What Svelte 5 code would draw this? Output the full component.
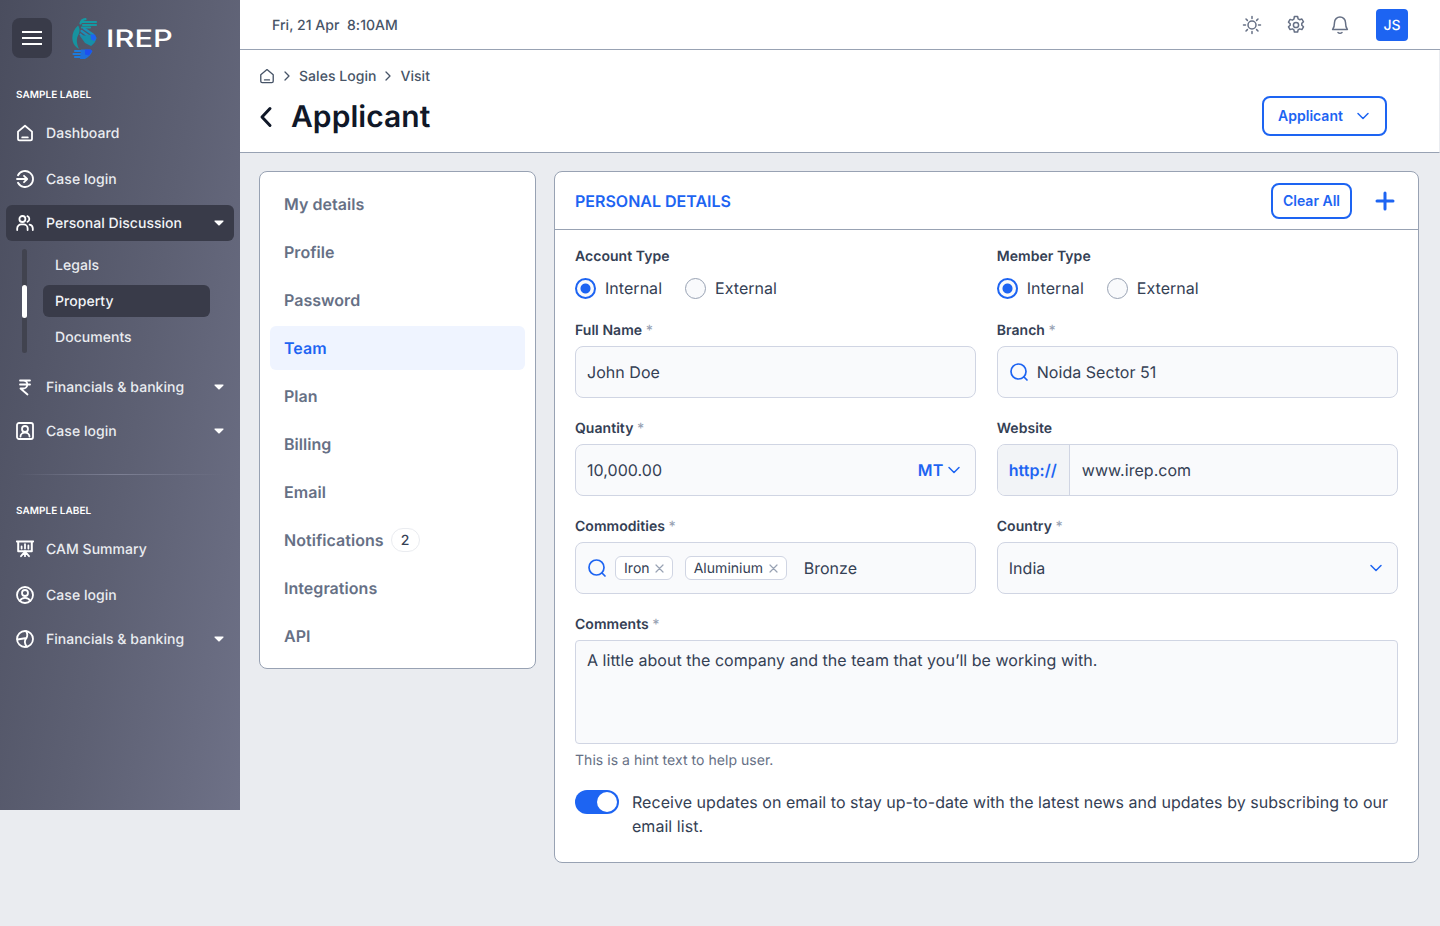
<script lang="ts">
  const topNav = [
    { label: "Dashboard", icon: "home", wide: false },
    { label: "Case login", icon: "login", wide: true }
  ];
  const subNav = ["Legals", "Property", "Documents"];
  const tabs = ["My details", "Profile", "Password", "Team", "Plan", "Billing", "Email", "Notifications", "Integrations", "API"];
</script>

{#snippet caret()}
  <svg class="caret" width="10" height="6" viewBox="0 0 10 6"><path d="M1 .5h8a.6.6 0 0 1 .45 1L5.4 5.4a.6.6 0 0 1-.8 0L.55 1.5A.6.6 0 0 1 1 .5z" fill="#fff" /></svg>
{/snippet}

{#snippet chevron(size = 16)}
  <svg width={size} height={size} viewBox="0 0 16 16" fill="none" stroke="currentColor" stroke-width="1.5" stroke-linecap="round" stroke-linejoin="round"><path d="M3 5.5l5 5 5-5" /></svg>
{/snippet}

{#snippet search()}
  <svg width="20" height="20" viewBox="0 0 20 20" fill="none" stroke="#1d64f2" stroke-width="1.7" stroke-linecap="round"><circle cx="9.500" cy="9.500" r="7.500" /><path d="M15 15l3 3" /></svg>
{/snippet}

{#snippet cross()}
  <svg width="9" height="9" viewBox="0 0 9 9" fill="none" stroke="#98a2b3" stroke-width="1.2" stroke-linecap="round"><path d="M1 1l7 7M8 1 1 8" /></svg>
{/snippet}

{#snippet navIcon(name: string)}
  <svg class="nav-icon" width="18" height="18" viewBox="0 0 18 18" fill="none" stroke="#fff" stroke-width="1.8" stroke-linecap="round" stroke-linejoin="round">
    {#if name === "home"}
      <path d="M2 7.600 9 1.800l7 5.800v7.200a1.600 1.600 0 0 1-1.600 1.600H3.600A1.600 1.600 0 0 1 2 14.800z" /><path d="M6.200 13.400h5.600" />
    {:else if name === "login"}
      <path d="M2 5.200A8 8 0 1 1 2 12.800" /><path d="M1 9h10M8 5.800 11.200 9 8 12.200" />
    {:else if name === "people"}
      <circle cx="6.400" cy="5" r="3" /><path d="M1.200 16v-1.600a4 4 0 0 1 4-4h2.400a4 4 0 0 1 4 4V16" /><path d="M11.400 2.200a3 3 0 0 1 0 5.600M13.600 10.600a4 4 0 0 1 3.200 3.800V16" />
    {:else if name === "rupee"}
      <path d="M4 2.500h10M4 6.500h10M4.500 2.500h2.800a4 4 0 0 1 0 8H4.500l7 6" />
    {:else if name === "badge"}
      <rect x="1" y="1" width="16" height="16" rx="2" /><circle cx="9" cy="7" r="3" /><path d="M4.500 14.500a4.500 4 0 0 1 9 0" />
    {:else if name === "board"}
      <path d="M.8 1.400h16.400M2.200 1.400v9.800h13.600V1.400" stroke-width="2" /><path d="M5.600 8.600V6.400M9 8.600V4.200M12.400 8.600V5.400M9 11.200v5M9 11.600l-4 4.600M9 11.600l4 4.600" />
    {:else if name === "user"}
      <circle cx="9" cy="9" r="8" /><circle cx="9" cy="7" r="3" /><path d="M3.800 15a5.600 5 0 0 1 10.400 0" />
    {:else if name === "globe"}
      <circle cx="9" cy="9" r="8" /><path d="M10 1c2 3 1.500 5 .5 7L1.500 9.500M10.500 8c-2.500 3-2 6 .5 8.800" />
    {/if}
  </svg>
{/snippet}

<div class="app">
  <aside class="sidebar">
    <div class="brand">
      <button class="burger" aria-label="Menu">
        <svg width="20" height="14" viewBox="0 0 20 14" stroke="#fff" stroke-width="2"><path d="M0 1h20M0 7h20M0 13h20" /></svg>
      </button>
      <div class="logo">
        <svg width="26" height="42" viewBox="0 0 26 42" fill="none" stroke-linecap="round">
          <g stroke="#149aa4" stroke-width="2.200">
            <path d="M8.500 5.500c.5-2.500 2.500-4 5-4.300M10 4h14M11 7h13M10 9.500h8" />
          </g>
          <path d="M6 7.500C1 12-.5 18 .8 23.500c.8 3 3 5.800 6.200 7.500C4.500 26 4 21 6.500 16.500 8 13.500 8 10 6 7.500z" fill="#16939f" />
          <g stroke="#1a8fb8" stroke-width="2.200">
            <path d="M12 10.500l9 6M9.500 13l12 8.500M8.500 16.500l10 8.500" />
          </g>
          <path d="M8 18l5 7 6 3c3-2 5-5 5.500-8-1-2-3-3-5-4-3 2-8 1-11.500 2z" fill="#178fa8" />
          <path d="M18.500 16.500h4.500l1.500 3.500-2 3-3.500-1.500z" fill="#1d64f2" />
          <g stroke="#1d7bdc" stroke-width="2.200">
            <path d="M3 33h8M1.500 36h9M3 39h9" />
          </g>
          <path d="M9 31.500h9.500l2 1.500c-1.500 3.500-4 6.500-7.500 8H8z" fill="#1d6fdc" />
          <path d="M13 31.500h5.500l1.500 1.500-3 4.500-4-1z" fill="#1d4ff2" />
        </svg>
        <span>IREP</span>
      </div>
    </div>

    <p class="nav-label">SAMPLE LABEL</p>
    {#each topNav as item}
      <a class="nav-row" class:wide={item.wide} href="#top">
        {@render navIcon(item.icon)}
        <span>{item.label}</span>
      </a>
    {/each}
    <a class="nav-row active" href="#top">
      {@render navIcon("people")}
      <span>Personal Discussion</span>
      {@render caret()}
    </a>

    <div class="sub-nav">
      <div class="rail"><i></i></div>
      <div class="sub-items">
        {#each subNav as item}
          <a class="sub-row" class:current={item === "Property"} href="#top">{item}</a>
        {/each}
      </div>
    </div>

    <a class="nav-row after-sub" href="#top">
      {@render navIcon("rupee")}
      <span>Financials &amp; banking</span>
      {@render caret()}
    </a>
    <a class="nav-row" href="#top">
      {@render navIcon("badge")}
      <span>Case login</span>
      {@render caret()}
    </a>

    <hr />

    <p class="nav-label second">SAMPLE LABEL</p>
    <a class="nav-row flush" href="#top">
      {@render navIcon("board")}
      <span>CAM Summary</span>
    </a>
    <a class="nav-row wide" href="#top">
      {@render navIcon("user")}
      <span>Case login</span>
    </a>
    <a class="nav-row" href="#top">
      {@render navIcon("globe")}
      <span>Financials &amp; banking</span>
      {@render caret()}
    </a>
  </aside>

  <main class="main">
    <header class="topbar">
      <span class="date">Fri, 21 Apr&nbsp; 8:10AM</span>
      <div class="top-actions">
        <svg width="20" height="20" viewBox="0 0 20 20" fill="none" stroke="#667085" stroke-width="1.500" stroke-linecap="round"><circle cx="10" cy="10" r="4" /><path d="M10 1.500v2M10 16.500v2M1.500 10h2M16.500 10h2M4 4l1.400 1.400M14.600 14.600 16 16M4 16l1.400-1.400M14.600 5.400 16 4" /></svg>
        <svg width="20" height="20" viewBox="0 0 20 20" fill="none" stroke="#667085" stroke-width="1.500" stroke-linejoin="round"><circle cx="10" cy="10" r="2.600" /><path d="M8.400 1.500h3.200l.5 2.300 1.500.9 2.300-.7 1.600 2.800-1.700 1.600v1.800l1.700 1.600-1.600 2.800-2.300-.7-1.500.9-.5 2.300H8.400l-.5-2.300-1.500-.9-2.300.7-1.600-2.800 1.700-1.600V8.800L2.500 7.200l1.600-2.800 2.300.7 1.500-.9z" /></svg>
        <svg width="20" height="20" viewBox="0 0 20 20" fill="none" stroke="#667085" stroke-width="1.500" stroke-linecap="round" stroke-linejoin="round"><path d="M10 2a5.500 5.500 0 0 0-5.500 5.500c0 4-.7 5.600-1.900 7h14.800c-1.200-1.400-1.900-3-1.900-7A5.500 5.500 0 0 0 10 2z" /><path d="M8 17.500c1 1 3 1 4 0" /></svg>
        <span class="avatar">JS</span>
      </div>
    </header>

    <section class="page-head">
      <div>
        <nav class="crumbs">
          <svg width="16" height="16" viewBox="0 0 18 18" fill="none" stroke="#475467" stroke-width="1.500" stroke-linejoin="round" stroke-linecap="round"><path d="M2 7.600 9 1.800l7 5.800v7.200a1.600 1.600 0 0 1-1.600 1.600H3.600A1.600 1.600 0 0 1 2 14.800z" /><path d="M6.200 13.400h5.600" /></svg>
          <svg class="sep" width="8" height="10" viewBox="0 0 8 10" fill="none" stroke="#475467" stroke-width="1.300" stroke-linecap="round" stroke-linejoin="round"><path d="M2 1l4 4-4 4" /></svg>
          <span>Sales Login</span>
          <svg class="sep" width="8" height="10" viewBox="0 0 8 10" fill="none" stroke="#475467" stroke-width="1.300" stroke-linecap="round" stroke-linejoin="round"><path d="M2 1l4 4-4 4" /></svg>
          <span>Visit</span>
        </nav>
        <div class="title-row">
          <svg width="14" height="22" viewBox="0 0 14 22" fill="none" stroke="#101828" stroke-width="3" stroke-linecap="round" stroke-linejoin="round"><path d="M11 2.500 3 11l8 8.500" /></svg>
          <h1>Applicant</h1>
        </div>
      </div>
      <button class="outline-btn applicant">Applicant {@render chevron()}</button>
    </section>

    <div class="content">
      <nav class="tabs">
        {#each tabs as tab}
          <a class="tab" class:selected={tab === "Team"} href="#top">
            {tab}
            {#if tab === "Notifications"}<span class="count">2</span>{/if}
          </a>
        {/each}
      </nav>

      <section class="card">
        <header class="card-head">
          <h2>PERSONAL DETAILS</h2>
          <button class="outline-btn clear">Clear All</button>
          <svg class="plus" width="20" height="20" viewBox="0 0 20 20" stroke="#1d64f2" stroke-width="3" stroke-linecap="round"><path d="M10 2v16M2 10h16" /></svg>
        </header>

        <form class="form">
          <div class="field">
            <span class="label first">Account Type</span>
            <div class="radios">
              <span class="radio on"><i></i>Internal</span>
              <span class="radio"><i></i>External</span>
            </div>
          </div>
          <div class="field">
            <span class="label first">Member Type</span>
            <div class="radios">
              <span class="radio on"><i></i>Internal</span>
              <span class="radio"><i></i>External</span>
            </div>
          </div>

          <div class="field">
            <span class="label">Full Name <em>*</em></span>
            <div class="input">John Doe</div>
          </div>
          <div class="field">
            <span class="label">Branch <em>*</em></span>
            <div class="input">{@render search()}<span>Noida Sector 51</span></div>
          </div>

          <div class="field">
            <span class="label">Quantity <em>*</em></span>
            <div class="input">
              <span class="grow">10,000.00</span>
              <span class="unit">MT {@render chevron()}</span>
            </div>
          </div>
          <div class="field">
            <span class="label">Website</span>
            <div class="input addon">
              <span class="prefix">http://</span>
              <span>www.irep.com</span>
            </div>
          </div>

          <div class="field">
            <span class="label">Commodities <em>*</em></span>
            <div class="input tags">
              {@render search()}
              <span class="chip">Iron {@render cross()}</span>
              <span class="chip">Aluminium {@render cross()}</span>
              <span class="typed">Bronze</span>
            </div>
          </div>
          <div class="field">
            <span class="label">Country <em>*</em></span>
            <div class="input">
              <span class="grow">India</span>
              <span class="unit">{@render chevron()}</span>
            </div>
          </div>

          <div class="field full">
            <span class="label">Comments <em>*</em></span>
            <div class="textarea">A little about the company and the team that you’ll be working with.</div>
            <p class="hint">This is a hint text to help user.</p>
          </div>

          <div class="consent full">
            <span class="toggle"><i></i></span>
            <p>Receive updates on email to stay up-to-date with the latest news and updates by subscribing to our email list.</p>
          </div>
        </form>
      </section>
    </div>
  </main>
</div>

<style>
  :global(body) {
    background: #eaecf0;
    font-family: Inter, "Liberation Sans", sans-serif;
    color: #101828;
    text-rendering: geometricPrecision;
    letter-spacing: 0.04px;
  }

  .app {
    display: flex;
    align-items: flex-start;
    height: 926px;
    overflow: hidden;
  }

  /* sidebar */
  .sidebar {
    flex: 0 0 240px;
    box-sizing: border-box;
    height: 810px;
    padding: 18px 6px 0;
    background: linear-gradient(100deg, #4a4d5e 0%, #5d6073 55%, #6e7187 100%);
    color: #eaecf0;
  }

  .brand {
    display: flex;
    align-items: flex-start;
    gap: 20px;
    height: 40px;
    padding-left: 6px;
  }

  .burger {
    display: grid;
    place-items: center;
    width: 40px;
    height: 40px;
    padding: 0;
    border: 0;
    border-radius: 8px;
    background: #393b49;
  }

  .logo {
    display: flex;
    align-items: center;
    gap: 8px;
  }

  .logo span {
    font-size: 24px;
    font-weight: 500;
    line-height: 28px;
    color: #fff;
    transform: scaleX(1.28);
    transform-origin: left center;
  }

  .nav-label {
    margin: 28px 0 0 10px;
    font-size: 10px;
    line-height: 18px;
    font-weight: 600;
    color: #fff;
  }

  .nav-label.second {
    margin-top: 27px;
  }

  .nav-row {
    display: flex;
    align-items: center;
    height: 36px;
    margin-top: 8px;
    padding: 0 10px;
    border-radius: 6px;
    color: #eaecf0;
    font-size: 14px;
    font-weight: 500;
    text-decoration: none;
  }

  .nav-row.wide {
    margin-top: 10px;
  }

  .nav-row.flush {
    margin-top: 11px;
  }

  .nav-row.after-sub {
    margin-top: 16px;
  }

  .nav-row:first-of-type {
    margin-top: 11px;
  }

  .nav-row span {
    flex: 1;
  }

  .nav-icon {
    flex: none;
    margin-right: 12px;
  }

  .nav-row.active {
    background: #393b49;
    color: #f2f4f7;
  }

  .sub-nav {
    display: flex;
    gap: 16px;
    margin-top: 8px;
    padding-left: 16px;
  }

  .rail {
    position: relative;
    width: 5px;
    border-radius: 3px;
    background: #41434f;
  }

  .rail i {
    position: absolute;
    top: 36px;
    left: 0;
    width: 5px;
    height: 33px;
    border-radius: 3px;
    background: #fff;
  }

  .sub-items {
    display: flex;
    flex-direction: column;
    gap: 4px;
    width: 167px;
  }

  .sub-row {
    height: 32px;
    padding: 0 12px;
    border-radius: 6px;
    color: #eaecf0;
    font-size: 14px;
    font-weight: 500;
    line-height: 34px;
    text-decoration: none;
  }

  .sub-row.current {
    background: #393b49;
    color: #f2f4f7;
  }

  hr {
    height: 1px;
    margin: 25px 10px 0;
    border: 0;
    background: linear-gradient(90deg, transparent, #7d8094 50%, transparent);
  }

  /* main */
  .main {
    flex: 1;
    min-width: 0;
  }

  .topbar {
    display: flex;
    align-items: center;
    justify-content: space-between;
    box-sizing: border-box;
    height: 50px;
    padding: 0 32px;
    background: #fff;
    border-bottom: 1px solid #98a2b3;
  }

  .date {
    margin-top: 2px;
    color: #475467;
    font-size: 14px;
    font-weight: 500;
  }

  .top-actions {
    display: flex;
    align-items: center;
    gap: 24px;
  }

  .avatar {
    display: grid;
    place-items: center;
    box-sizing: border-box;
    width: 32px;
    height: 32px;
    margin-left: 2px;
    padding-top: 2px;
    border-radius: 4px;
    background: #1d64f2;
    color: #fff;
    font-size: 14px;
    font-weight: 500;
  }

  .page-head {
    display: flex;
    justify-content: space-between;
    box-sizing: border-box;
    height: 103px;
    padding: 16px 52px 0 19px;
    background: #fff;
    border-right: 1px solid #eaecf0;
    border-bottom: 1px solid #98a2b3;
  }

  .crumbs {
    display: flex;
    align-items: center;
    height: 20px;
    color: #475467;
    font-size: 14px;
    font-weight: 500;
  }

  .crumbs .sep {
    margin: 0 8px;
  }

  .title-row {
    display: flex;
    align-items: center;
    gap: 18px;
    height: 38px;
    margin-top: 12px;
  }

  h1 {
    margin: 0;
    font-size: 30px;
    font-weight: 600;
    line-height: 38px;
  }

  .outline-btn {
    display: inline-flex;
    align-items: center;
    justify-content: center;
    box-sizing: border-box;
    border: 2px solid #1d64f2;
    border-radius: 8px;
    background: #fff;
    color: #1d64f2;
    font-family: inherit;
    font-size: 14px;
    font-weight: 600;
  }

  .applicant {
    gap: 12px;
    width: 125px;
    height: 40px;
    margin-top: 30px;
    padding-bottom: 2px;
  }

  .content {
    display: flex;
    align-items: flex-start;
    gap: 18px;
    padding: 18px 21px 0 19px;
  }

  .tabs {
    display: flex;
    flex-direction: column;
    gap: 4px;
    flex: 0 0 277px;
    box-sizing: border-box;
    padding: 10px;
    background: #fff;
    border: 1px solid #98a2b3;
    border-radius: 8px;
  }

  .tab {
    display: flex;
    align-items: center;
    gap: 7px;
    height: 44px;
    padding: 0 14px;
    border-radius: 6px;
    color: #667085;
    font-size: 16px;
    font-weight: 600;
    text-decoration: none;
  }

  .tab.selected {
    background: #eff4ff;
    color: #1d64f2;
  }

  .count {
    display: grid;
    place-items: center;
    width: 29px;
    height: 24px;
    border: 1px solid #eaecf0;
    border-radius: 12px;
    box-sizing: border-box;
    color: #344054;
    font-size: 14px;
    font-weight: 500;
  }

  .card {
    flex: 1;
    min-width: 0;
    background: #fff;
    border: 1px solid #98a2b3;
    border-radius: 8px;
  }

  .card-head {
    display: flex;
    align-items: center;
    box-sizing: border-box;
    height: 58px;
    padding: 0 23px 0 20px;
    border-bottom: 1px solid #98a2b3;
  }

  h2 {
    flex: 1;
    margin: 0;
    color: #1d64f2;
    font-size: 16px;
    font-weight: 600;
    letter-spacing: 0;
  }

  .clear {
    width: 81px;
    height: 36px;
    margin-right: 23px;
  }

  .form {
    display: grid;
    grid-template-columns: 1fr 1fr;
    gap: 20px 20.5px;
    padding: 16px 20px 24px;
  }

  .full {
    grid-column: 1 / -1;
  }

  .label {
    display: block;
    margin-bottom: 4px;
    color: #344054;
    font-size: 14px;
    font-weight: 600;
    line-height: 22px;
  }

  .label.first {
    margin-bottom: 8px;
  }

  .label em {
    color: #98a2b3;
    font-style: normal;
    font-weight: 500;
  }

  .radios {
    display: flex;
    gap: 23px;
    height: 24px;
  }

  .radio {
    display: flex;
    align-items: center;
    gap: 9px;
    color: #344054;
    font-size: 16px;
    line-height: 24px;
  }

  .radio i {
    box-sizing: border-box;
    width: 21px;
    height: 21px;
    border: 1px solid #98a2b3;
    border-radius: 50%;
    background: #f9fafc;
  }

  .radio.on i {
    border: 2px solid #1d64f2;
    background: radial-gradient(circle, #1d64f2 0 4.500px, #f9fafc 5.500px);
  }

  .input {
    display: flex;
    align-items: center;
    gap: 8px;
    box-sizing: border-box;
    height: 52px;
    padding: 0 11px;
    background: #f9fafc;
    border: 1px solid #d0d5e3;
    border-radius: 8px;
    color: #344054;
    font-size: 16px;
  }

  .grow {
    flex: 1;
  }

  .unit {
    display: flex;
    align-items: center;
    gap: 3px;
    margin-right: 2px;
    color: #1d64f2;
    font-weight: 600;
  }

  .addon {
    padding: 0;
    gap: 0;
    overflow: hidden;
  }

  .addon .prefix {
    display: flex;
    align-items: center;
    height: 100%;
    margin-right: 12px;
    padding: 0 12px 0 11px;
    background: #f2f4f7;
    border-right: 1px solid #d0d5e3;
    color: #1d64f2;
    font-weight: 600;
  }

  .tags {
    gap: 0;
  }

  .tags > svg {
    margin-right: 8px;
  }

  .chip {
    display: flex;
    align-items: center;
    gap: 5.5px;
    box-sizing: border-box;
    height: 24px;
    margin-right: 11.5px;
    padding: 1px 8px 0;
    background: #fff;
    border: 1px solid #d0d5e3;
    border-radius: 6px;
    color: #344054;
    font-size: 14px;
    line-height: 20px;
  }

  .typed {
    margin-left: 5.5px;
  }

  .textarea {
    box-sizing: border-box;
    height: 104px;
    padding: 7px 11px;
    background: #f9fafc;
    border: 1px solid #d0d5e3;
    border-radius: 4px;
    color: #344054;
    font-size: 16px;
    line-height: 24px;
  }

  .hint {
    margin: 9px 0 0;
    color: #667085;
    font-size: 14px;
    line-height: 16px;
  }

  .consent {
    display: flex;
    gap: 13px;
    margin-top: 1px;
  }

  .consent p {
    margin: 0;
    color: #344054;
    font-size: 16px;
    line-height: 24px;
  }

  .toggle {
    flex: 0 0 44px;
    display: flex;
    justify-content: flex-end;
    box-sizing: border-box;
    height: 24px;
    padding: 2px;
    border-radius: 12px;
    background: #1d64f2;
  }

  .toggle i {
    width: 20px;
    height: 20px;
    border-radius: 50%;
    background: #fff;
  }
</style>
